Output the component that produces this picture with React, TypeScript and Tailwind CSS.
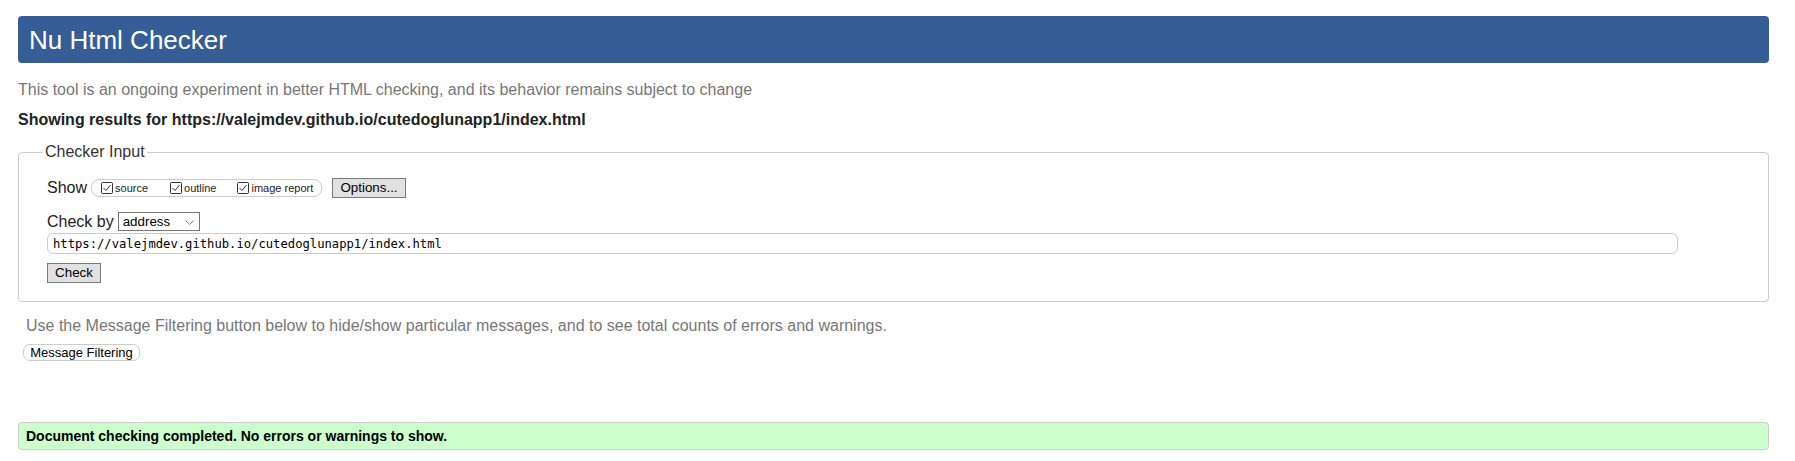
import React from "react";

const CheckMark = () => (
  <svg width="12" height="12" viewBox="0 0 12 12" className="shrink-0">
    <rect x="0.5" y="0.5" width="11" height="11" rx="1" fill="#fff" stroke="#333" />
    <polyline points="2.5,6 5,8.5 9.5,3" fill="none" stroke="#333" strokeWidth="1" />
  </svg>
);

const showOptions = [
  { label: "source", gap: "" },
  { label: "outline", gap: "ml-[22px]" },
  { label: "image report", gap: "ml-[21px]" },
];

export default function App() {
  return (
    <div className="min-h-[461px] bg-white pt-[16px] pl-[18px] pr-[26px] font-['Liberation_Sans',Arial,sans-serif]">
      {/* Title bar */}
      <h1 className="flex h-[47px] items-center rounded-[4px] bg-[#365d95] pl-[11px] text-[26px] leading-[30px] text-white">
        Nu Html Checker
      </h1>

      <p className="mt-[18px] text-[16px] leading-[18px] text-[#777]">
        This tool is an ongoing experiment in better HTML checking, and its behavior remains subject to change
      </p>
      <p className="mt-[12px] text-[16px] font-bold leading-[18px] text-[#222]">
        Showing results for https://valejmdev.github.io/cutedoglunapp1/index.html
      </p>

      {/* Checker input */}
      <fieldset className="mt-[14px] rounded-[4px] border border-[#ccc] pb-[18px]">
        <legend className="ml-[24px] px-[2px] text-[16px] leading-[18px] text-[#333]">Checker Input</legend>
        <div className="pl-[28px] text-[#222]">
          <div className="mt-[17px] flex h-[20px] items-center">
            <span className="text-[16px] leading-[18px]">Show</span>
            <div className="ml-[4px] flex h-[18px] w-[231px] items-center rounded-[8px] border border-[#ccc] pl-[9px]">
              {showOptions.map((opt) => (
                <label key={opt.label} className={`flex items-center gap-[2px] ${opt.gap}`}>
                  <CheckMark />
                  <span className="text-[11px] leading-[12px]">{opt.label}</span>
                </label>
              ))}
            </div>
            <button className="ml-[10px] h-[20px] w-[74px] border border-[#7a7a7a] bg-[#e1e1e1] text-[13.33px] leading-[16px] text-black">
              Options...
            </button>
          </div>

          <div className="mt-[14px] flex h-[19px] items-center">
            <span className="text-[16px] leading-[18px]">Check by</span>
            <div className="relative ml-[4px] flex h-[19px] w-[82px] items-center border border-[#767676] bg-white pl-[4px] text-[13.33px] text-black">
              address
              <svg width="9" height="5" viewBox="0 0 9 5" className="absolute right-[5px] top-[7px]">
                <polyline points="0.5,0.5 4.5,4.5 8.5,0.5" fill="none" stroke="#888" strokeWidth="1" />
              </svg>
            </div>
          </div>

          <input
            readOnly
            value="https://valejmdev.github.io/cutedoglunapp1/index.html"
            className="mt-[2px] block h-[21px] w-[1631px] rounded-[6px] border border-[#ccc] pl-[5px] font-['DejaVu_Sans_Mono',monospace] text-[12.2px] text-black outline-none"
          />

          <button className="mt-[9px] block h-[20px] w-[54px] border border-[#7a7a7a] bg-[#e1e1e1] text-[13.33px] leading-[16px] text-black">
            Check
          </button>
        </div>
      </fieldset>

      <p className="mt-[15px] ml-[8px] text-[16px] leading-[18px] text-[#777]">
        Use the Message Filtering button below to hide/show particular messages, and to see total counts of errors and warnings.
      </p>
      <button className="mt-[9px] ml-[5px] block h-[17px] w-[117px] rounded-[7px] border border-[#ccc] bg-white text-[13px] leading-[15px] text-black">
        Message Filtering
      </button>

      {/* Result */}
      <div className="mt-[61px] flex h-[28px] items-center rounded-[4px] border border-[#ccc] bg-[#ccffcc] pl-[7px] text-[14px] font-bold text-black">
        Document checking completed. No errors or warnings to show.
      </div>
    </div>
  );
}
